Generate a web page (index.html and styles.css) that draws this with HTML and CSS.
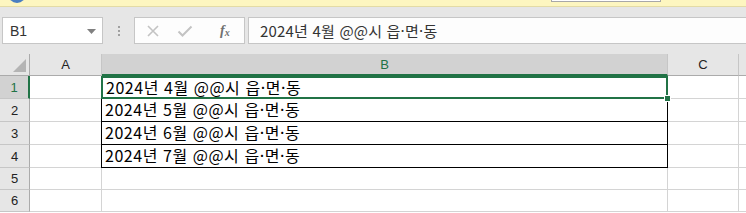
FILE: index.html
```html
<!DOCTYPE html>
<html lang="ko">
<head>
<meta charset="utf-8">
<link rel="stylesheet" href="styles.css">
</head>
<body>
<div class="msgbar">
  <div class="msg-icon"></div>
  <div class="msg-btn"></div>
</div>
<div class="toolbar">
  <div class="namebox"><span>B1</span><svg class="dd" width="9" height="5" viewBox="0 0 9 5"><path d="M0 0h9L4.5 5z" fill="#808080"/></svg></div>
  <div class="grip"><i></i><i></i><i></i></div>
  <div class="fbtns">
    <svg width="14" height="14" viewBox="0 0 14 14"><path d="M2 2l10 10M12 2L2 12" stroke="#c3c3c3" stroke-width="1.6" fill="none"/></svg>
    <svg width="16" height="14" viewBox="0 0 16 14"><path d="M1.5 7.5l4 4 9-9" stroke="#c3c3c3" stroke-width="2" fill="none"/></svg>
    <span class="fx">f<sub>x</sub></span>
  </div>
  <div class="fbox">2024년 4월 @@시 읍·면·동</div>
</div>
<div class="sheet">
  <div class="corner"><div class="tri"></div></div>
  <div class="ch">A</div>
  <div class="ch sel">B</div>
  <div class="ch">C</div>
  <div class="ch last"></div>

  <div class="rh sel">1</div>
  <div class="c"></div>
  <div class="c b act">2024년 4월 @@시 읍·면·동<div class="handle"></div></div>
  <div class="c"></div>
  <div class="c last"></div>

  <div class="rh">2</div>
  <div class="c"></div>
  <div class="c b">2024년 5월 @@시 읍·면·동</div>
  <div class="c"></div>
  <div class="c last"></div>

  <div class="rh">3</div>
  <div class="c"></div>
  <div class="c b">2024년 6월 @@시 읍·면·동</div>
  <div class="c"></div>
  <div class="c last"></div>

  <div class="rh">4</div>
  <div class="c"></div>
  <div class="c b">2024년 7월 @@시 읍·면·동</div>
  <div class="c"></div>
  <div class="c last"></div>

  <div class="rh">5</div>
  <div class="c"></div>
  <div class="c"></div>
  <div class="c"></div>
  <div class="c last"></div>

  <div class="rh">6</div>
  <div class="c"></div>
  <div class="c"></div>
  <div class="c"></div>
  <div class="c last"></div>
</div>
</body>
</html>
```
FILE: styles.css
```css
* { box-sizing: border-box; }
html, body { margin: 0; padding: 0; }
body {
  width: 746px;
  height: 213px;
  overflow: hidden;
  background: #ffffff;
  font-family: "Noto Sans CJK KR", "Noto Sans", sans-serif;
}
.msgbar {
  height: 7px;
  background: #fdf6c0;
  border-bottom: 1px solid #e3dba6;
  display: flex;
  align-items: flex-start;
  overflow: hidden;
}
.msg-icon {
  width: 18px;
  height: 18px;
  border-radius: 50%;
  background: #4a7fc1;
  margin: -15px 0 0 8px;
}
.msg-btn {
  width: 110px;
  height: 3px;
  margin: -1px 0 0 525px;
  border: 1px solid #a8a8a8;
  border-top: none;
  background: #ffffff;
}
.toolbar {
  height: 47px;
  background: #e6e6e6;
  display: flex;
  align-items: flex-start;
  padding-top: 10px;
}
.namebox {
  margin-left: 2px;
  width: 101px;
  height: 27px;
  border: 1px solid #c6c6c6;
  background: #ffffff;
  display: flex;
  align-items: center;
  justify-content: space-between;
  padding: 0 6px 0 7px;
  font-family: "Liberation Sans", "Open Sans", sans-serif;
  font-size: 14px;
  color: #333;
}
.namebox .dd { margin-top: 1px; }
.grip {
  width: 31px;
  height: 27px;
  display: flex;
  flex-direction: column;
  align-items: center;
  justify-content: center;
  gap: 2px;
}
.grip i {
  display: block;
  width: 2px;
  height: 2px;
  background: #a0a0a0;
}
.fbtns {
  width: 111px;
  height: 27px;
  border: 1px solid #c6c6c6;
  background: #fdfdfd;
  display: flex;
  align-items: center;
  padding-left: 11px;
}
.fbtns svg:nth-child(1) { margin-right: 17px; }
.fbtns svg:nth-child(2) { margin-right: 27px; }
.fx {
  font-family: "Liberation Serif", serif;
  font-style: italic;
  font-weight: bold;
  font-size: 14px;
  color: #707070;
  line-height: 1;
}
.fx sub { font-size: 10px; vertical-align: -1px; }
.fbox {
  margin-left: 3px;
  flex: 1;
  height: 27px;
  border: 1px solid #c6c6c6;
  border-right: none;
  background: #fdfdfd;
  padding-left: 11px;
  display: flex;
  align-items: center;
  font-size: 15px;
  letter-spacing: 0.2px;
  color: #333;
}
.sheet {
  display: grid;
  grid-template-columns: 30px 72px 566px 71px 1fr;
  grid-template-rows: 22px 23px 23px 23px 23px 22px 22px;
}
.corner {
  background: #e6e6e6;
  border-right: 1px solid #ababab;
  border-bottom: 1px solid #ababab;
  position: relative;
}
.tri {
  position: absolute;
  right: 3px;
  bottom: 3px;
  width: 0;
  height: 0;
  border-style: solid;
  border-width: 0 0 13px 13px;
  border-color: transparent transparent #b4b4b4 transparent;
}
.ch {
  background: #e6e6e6;
  border-right: 1px solid #c6c6c6;
  border-bottom: 1px solid #ababab;
  display: flex;
  align-items: center;
  justify-content: center;
  font-family: "Liberation Sans", "Open Sans", sans-serif;
  font-size: 13px;
  color: #222;
}
.ch.sel {
  background: #d2d2d2;
  border-bottom: 2px solid #217346;
  color: #217346;
  padding-top: 1px;
}
.ch.last { border-right: none; }
.rh {
  background: #e6e6e6;
  border-right: 1px solid #ababab;
  border-bottom: 1px solid #c6c6c6;
  display: flex;
  align-items: center;
  justify-content: center;
  font-family: "Liberation Sans", "Open Sans", sans-serif;
  font-size: 13px;
  color: #222;
}
.rh.sel {
  background: #d2d2d2;
  border-right: 2px solid #217346;
  color: #217346;
}
.c {
  border-right: 1px solid #d4d4d4;
  border-bottom: 1px solid #d4d4d4;
}
.c.last { border-right: none; }
.c.b {
  border-right: 1px solid #000;
  border-bottom: 1px solid #000;
  box-shadow: -1px 0 0 #000;
  padding-left: 3px;
  font-size: 16px;
  letter-spacing: 0.55px;
  line-height: 21px;
  color: #000;
  white-space: nowrap;
}
.c.b.act {
  position: relative;
  border: 2px solid #217346;
  box-shadow: none;
  margin-left: -1px;
  padding-left: 3px;
  line-height: 19px;
}
.handle {
  position: absolute;
  right: -5px;
  bottom: -5px;
  width: 7px;
  height: 7px;
  background: #217346;
  border: 1px solid #fff;
}
```
